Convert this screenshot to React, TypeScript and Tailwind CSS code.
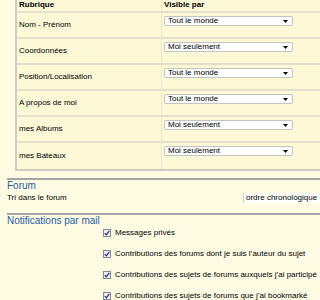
const rows = [
  { label: 'Nom - Prénom', value: 'Tout le monde' },
  { label: 'Coordonnées', value: 'Moi seulement' },
  { label: 'Position/Localisation', value: 'Tout le monde' },
  { label: 'A propos de moi', value: 'Tout le monde' },
  { label: 'mes Albums', value: 'Moi seulement' },
  { label: 'mes Bateaux', value: 'Moi seulement' },
];

const notifications = [
  'Messages privés',
  'Contributions des forums dont je suis l\u2019auteur du sujet',
  'Contributions des sujets de forums auxquels j\u2019ai participé',
  'Contributions des sujets de forums que j\u2019ai bookmarké',
];

function Select({ value }: { value: string }) {
  return (
    <div className="flex h-[10px] w-[129px] items-center justify-between rounded-[2px] border border-[#c4c4c4] bg-white pl-[3px] pr-[4px] leading-[8px]">
      <span>{value}</span>
      <svg width="5" height="3" viewBox="0 0 5 3">
        <path d="M0 0h5L2.5 3z" fill="#000" />
      </svg>
    </div>
  );
}

function Checkbox() {
  return (
    <span className="flex h-[8px] w-[8px] items-center justify-center border border-[#8a8a8a] bg-[#eef0f6]">
      <svg width="6" height="6" viewBox="0 0 6 6">
        <path d="M0.8 3.2 2.3 4.8 5.3 0.8" fill="none" stroke="#1c2f8a" strokeWidth="1.2" />
      </svg>
    </span>
  );
}

export default function App() {
  return (
    <div className="h-[300px] w-[320px] overflow-hidden bg-[#fffce3] font-['Liberation_Sans',Arial,sans-serif] text-[8px] text-black">
      <div className="ml-[15px] w-[320px] border-b-2 border-l-2 border-[#cfcdc0] bg-[#fdf9d7]">
        <div className="grid h-[13px] grid-cols-[144px_1fr] border-b-2 border-[#e2dfca] font-bold">
          <div className="pl-[2px] leading-[10px]">Rubrique</div>
          <div className="border-l border-[#ebe7cf] pl-[2px] leading-[10px]">Visible par</div>
        </div>
        {rows.map((row, i) => (
          <div
            key={row.label}
            className={`grid h-[26px] grid-cols-[144px_1fr] ${i < rows.length - 1 ? 'border-b-2 border-[#e2dfca]' : ''}`}
          >
            <div className="flex items-center pl-[2px]">{row.label}</div>
            <div className="border-l border-[#ebe7cf] pl-[2px] pt-[3px]">
              <Select value={row.value} />
            </div>
          </div>
        ))}
      </div>

      <div className="ml-[7px] mt-[7px] border-t-2 border-[#a5a5a5]">
        <div className="text-[10px] leading-[12px] text-[#1f5aa8]">Forum</div>
        <div className="flex items-center justify-between">
          <span>Tri dans le forum</span>
          <span className="h-[10px] w-[77px] border-l border-[#d0d0d0] bg-white pl-[2px] leading-[10px]">
            ordre chronologique
          </span>
        </div>
      </div>

      <div className="ml-[7px] mt-[9px] border-t-2 border-[#a5a5a5]">
        <div className="text-[10px] leading-[12px] text-[#1f5aa8]">Notifications par mail</div>
        <div className="flex flex-col gap-[11px] pl-[96px] pt-[1px]">
          {notifications.map((n) => (
            <div key={n} className="flex h-[10px] items-center gap-[4px]">
              <Checkbox />
              <span className="whitespace-nowrap">{n}</span>
            </div>
          ))}
        </div>
      </div>
    </div>
  );
}
